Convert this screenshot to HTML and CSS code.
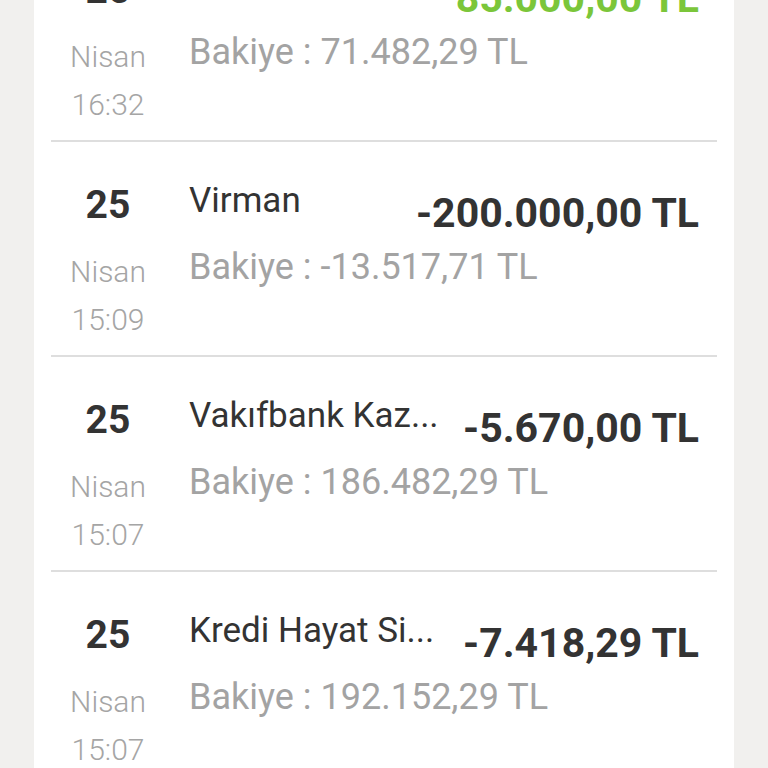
FILE: index.html
```html
<!DOCTYPE html>
<html lang="tr">
<head>
    <meta charset="UTF-8">
    <meta name="viewport" content="width=device-width, initial-scale=1.0">
    <title>Hesap Hareketleri</title>
    <link rel="stylesheet" href="styles.css">
</head>
<body>
    <div class="card">
        <div class="tx-row">
            <div class="tx-date">
                <div class="tx-day">25</div>
                <div class="tx-month">Nisan</div>
                <div class="tx-time">16:32</div>
            </div>
            <div class="tx-body">
                <div class="tx-top">
                    <div class="tx-title">Gelen Havale</div>
                    <div class="tx-amount plus">85.000,00 TL</div>
                </div>
                <div class="tx-balance">Bakiye : 71.482,29 TL</div>
            </div>
        </div>
        <div class="tx-row">
            <div class="tx-date">
                <div class="tx-day">25</div>
                <div class="tx-month">Nisan</div>
                <div class="tx-time">15:09</div>
            </div>
            <div class="tx-body">
                <div class="tx-top">
                    <div class="tx-title">Virman</div>
                    <div class="tx-amount">-200.000,00 TL</div>
                </div>
                <div class="tx-balance">Bakiye : -13.517,71 TL</div>
            </div>
        </div>
        <div class="tx-row">
            <div class="tx-date">
                <div class="tx-day">25</div>
                <div class="tx-month">Nisan</div>
                <div class="tx-time">15:07</div>
            </div>
            <div class="tx-body">
                <div class="tx-top">
                    <div class="tx-title">Vakıfbank Kaz...</div>
                    <div class="tx-amount">-5.670,00 TL</div>
                </div>
                <div class="tx-balance">Bakiye : 186.482,29 TL</div>
            </div>
        </div>
        <div class="tx-row">
            <div class="tx-date">
                <div class="tx-day">25</div>
                <div class="tx-month">Nisan</div>
                <div class="tx-time">15:07</div>
            </div>
            <div class="tx-body">
                <div class="tx-top">
                    <div class="tx-title">Kredi Hayat Si...</div>
                    <div class="tx-amount">-7.418,29 TL</div>
                </div>
                <div class="tx-balance">Bakiye : 192.152,29 TL</div>
            </div>
        </div>
    </div>
</body>
</html>
```

FILE: styles.css
```css
body {
    background-color: #f1f0ee;
    font-family: Roboto, "Liberation Sans", sans-serif;
    margin: 0;
    padding: 0;
    overflow: hidden;
}
.card {
    width: 700px;
    margin: -73px 0 0 34px;
    background-color: #fff;
}
.tx-row {
    display: flex;
    margin: 0 17px;
    padding: 34px 18px 11px 0;
    border-bottom: 2px solid #dedede;
}
.tx-date {
    width: 114px;
    flex-shrink: 0;
    text-align: center;
}
.tx-day {
    margin-top: 4px;
    font-size: 39px;
    font-weight: bold;
    line-height: 50px;
    color: #333;
}
.tx-month {
    margin-top: 18px;
}
.tx-month,
.tx-time {
    font-size: 30px;
    font-weight: 300;
    line-height: 48px;
    color: #a5a5a5;
}
.tx-body {
    flex: 1;
    min-width: 0;
    margin-left: 24px;
}
.tx-top {
    display: flex;
    align-items: flex-start;
}
.tx-title {
    flex: 1;
    min-width: 0;
    font-size: 35px;
    line-height: 50px;
    color: #333;
    white-space: nowrap;
    overflow: hidden;
    text-overflow: ellipsis;
}
.tx-amount {
    flex-shrink: 0;
    margin: 12px 0 0 20px;
    font-size: 41px;
    font-weight: bold;
    line-height: 50px;
    color: #333;
}
.tx-amount.plus {
    color: #7bc63a;
}
.tx-balance {
    margin-top: 4px;
    font-size: 36px;
    line-height: 50px;
    color: #a3a3a3;
}
```
